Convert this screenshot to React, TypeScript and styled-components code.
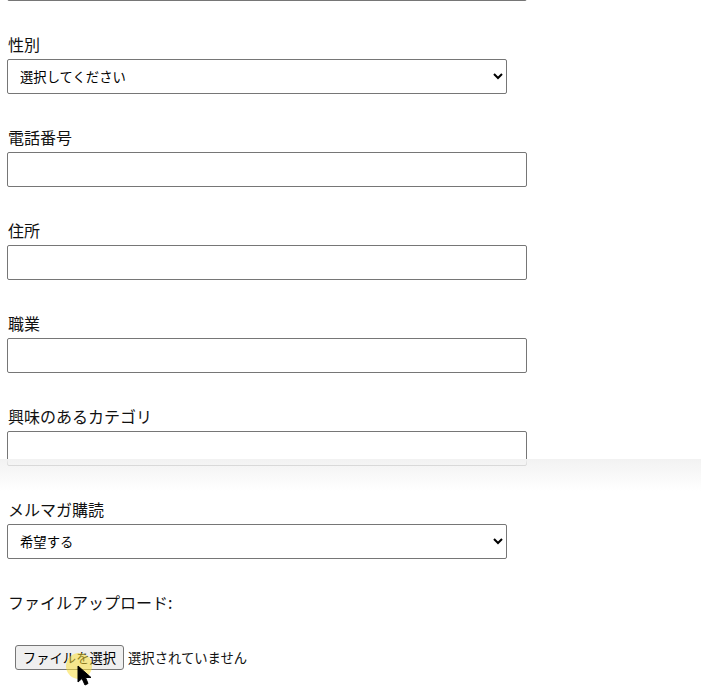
import React from 'react'
import styled, {createGlobalStyle} from 'styled-components'

const Global = createGlobalStyle`
  html, body {
    margin: 0;
    padding: 0;
    background: #fff;
    overflow: hidden;
  }
  body {
    font-family: "Noto Sans CJK JP", "Noto Sans", sans-serif;
    color: #000;
  }
`

const Page = styled.div`
  position: relative;
  width: 701px;
  height: 698px;
  overflow: hidden;
`

const Form = styled.form`
  display: flex;
  flex-direction: column;
  gap: 31px;
  padding-left: 7px;
  margin-top: -34px;
`

const Field = styled.div`
  display: flex;
  flex-direction: column;
  align-items: flex-start;
`

const Label = styled.label`
  font-size: 16px;
  line-height: 24px;
  height: 24px;
  margin: 0 0 3px 1px;
  color: #111;
`

const TextInput = styled.input`
  box-sizing: border-box;
  width: 520px;
  height: 35px;
  padding: 0 12px;
  border: 1px solid #767676;
  border-radius: 2px;
  background: #fff;
  font: inherit;
`

const Select = styled.select`
  box-sizing: border-box;
  width: 500px;
  height: 35px;
  padding: 0 8px;
  border: 1px solid #767676;
  border-radius: 2px;
  background: #fff;
  color: #000;
  font-family: inherit;
  font-size: 13.33px;
`

const FileRow = styled.div`
  display: flex;
  align-items: center;
  gap: 4px;
  margin: 28px 0 0 8px;
  font-size: 13.33px;
  color: #111;
`

const FileButton = styled.button`
  box-sizing: border-box;
  width: 109px;
  height: 25px;
  padding: 0;
  border: 1px solid #767676;
  border-radius: 3px;
  background: #efefef;
  color: #000;
  font-family: inherit;
  font-size: 13.33px;
`

const ScrollFade = styled.div`
  position: absolute;
  left: 0;
  right: 0;
  top: 459px;
  height: 32px;
  background: linear-gradient(to bottom, #f2f2f2, rgba(255, 255, 255, 0));
  pointer-events: none;
`

const Highlight = styled.div`
  position: absolute;
  left: 66px;
  top: 653px;
  width: 26px;
  height: 26px;
  border-radius: 50%;
  background: rgba(250, 222, 60, 0.55);
  pointer-events: none;
`

const Cursor = styled.svg`
  position: absolute;
  left: 76px;
  top: 664px;
  width: 18px;
  height: 24px;
  pointer-events: none;
`

function Text({label}: {label: string}) {
    return (
        <Field>
            <Label>{label}</Label>
            <TextInput type="text" />
        </Field>
    )
}

function Choice({label, option}: {label: string; option: string}) {
    return (
        <Field>
            <Label>{label}</Label>
            <Select defaultValue={option}>
                <option>{option}</option>
            </Select>
        </Field>
    )
}

export default function App() {
    return (
        <Page>
            <Global />
            <Form>
                <Field>
                    <TextInput type="text" />
                </Field>
                <Choice label="性別" option="選択してください" />
                <Text label="電話番号" />
                <Text label="住所" />
                <Text label="職業" />
                <Text label="興味のあるカテゴリ" />
                <Choice label="メルマガ購読" option="希望する" />
                <Field>
                    <Label>ファイルアップロード:</Label>
                    <FileRow>
                        <FileButton type="button">ファイルを選択</FileButton>
                        <span>選択されていません</span>
                    </FileRow>
                </Field>
            </Form>
            <ScrollFade />
            <Highlight />
            <Cursor viewBox="0 0 18 24">
                <path d="M2 2 L2 18 L6 14.5 L9 21 L12 19.5 L9.5 13.5 L15 13.5 Z" fill="#000" stroke="#000" strokeWidth="1" />
            </Cursor>
        </Page>
    )
}
